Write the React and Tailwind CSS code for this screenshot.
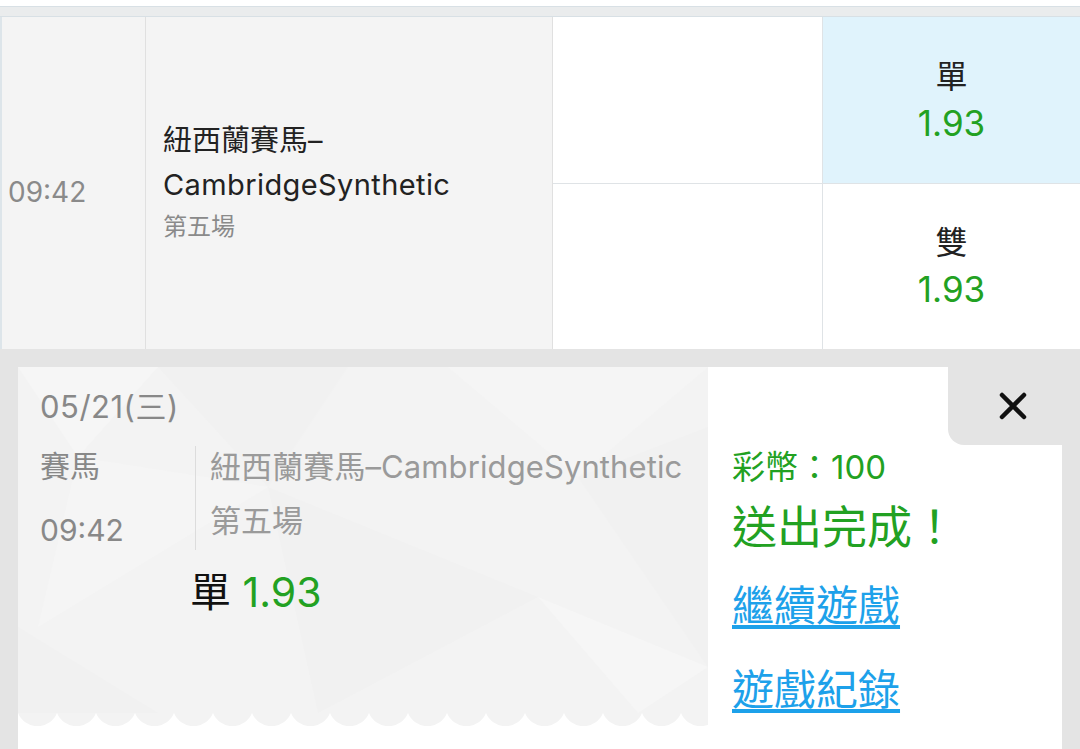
import React from 'react';

const font = { fontFamily: 'Inter, "Noto Sans CJK TC", sans-serif' };

function Scallop() {
  return (
    <svg width="690" height="13" className="block">
      <defs>
        <pattern id="scallop" width="39" height="13" patternUnits="userSpaceOnUse">
          <path d="M0 0 A21 21 0 0 0 39 0 Z" fill="#f3f3f3" />
        </pattern>
      </defs>
      <rect width="690" height="13" fill="url(#scallop)" />
    </svg>
  );
}

function LowPoly() {
  return (
    <svg className="absolute inset-0" width="690" height="346">
      <polygon points="0,0 140,0 60,90" fill="#f6f6f6" />
      <polygon points="140,0 330,0 250,120" fill="#f1f1f1" />
      <polygon points="60,90 250,120 20,260" fill="#f5f5f5" />
      <polygon points="250,120 520,230 300,346" fill="#f1f1f1" />
      <polygon points="430,0 690,0 560,110" fill="#f5f5f5" />
      <polygon points="560,110 690,60 690,300" fill="#f1f1f1" />
      <polygon points="0,260 140,346 0,346" fill="#f1f1f1" />
      <polygon points="520,230 690,300 620,346" fill="#f6f6f6" />
    </svg>
  );
}

function OddsCell({ label, odds, active }) {
  return (
    <div
      className={
        'flex-1 flex flex-col items-center justify-center border-b border-[#dfe3e6] last:border-b-0 ' +
        (active ? 'bg-[#e0f3fc]' : 'bg-white')
      }
    >
      <div className="text-[32px] leading-[46px] text-[#222]">{label}</div>
      <div className="text-[35px] leading-[46px] text-[#22a122]">{odds}</div>
    </div>
  );
}

export default function App() {
  return (
    <div className="w-[1080px] h-[749px] overflow-hidden bg-[#e4e4e4] flex flex-col" style={font}>
      <div className="h-[6px] bg-white shrink-0" />
      <div className="h-[11px] bg-[#eaeced] border-y border-[#d8e0e5] shrink-0" />

      {/* race row */}
      <div className="flex h-[332px] shrink-0 border-l-2 border-[#dde5ea]">
        <div className="w-[144px] bg-[#f4f4f4] border-r border-[#e0e0e0] flex items-center pl-[6px] pt-[18px]">
          <span className="text-[28px] text-[#8a8a8a]">09:42</span>
        </div>
        <div className="w-[407px] bg-[#f4f4f4] border-r border-[#e0e0e0] flex flex-col justify-center pl-[17px]">
          <div className="text-[29px] leading-[44px] text-[#222]">紐西蘭賽馬–</div>
          <div className="text-[29px] leading-[44px] text-[#222] tracking-[0.4px]">CambridgeSynthetic</div>
          <div className="text-[24px] leading-[40px] text-[#8a8a8a]">第五場</div>
        </div>
        <div className="w-[270px] flex flex-col border-r border-[#dfe3e6]">
          <div className="flex-1 bg-white border-b border-[#dfe3e6]" />
          <div className="flex-1 bg-white" />
        </div>
        <div className="flex-1 flex flex-col">
          <OddsCell label="單" odds="1.93" active />
          <OddsCell label="雙" odds="1.93" />
        </div>
      </div>

      {/* ticket */}
      <div className="flex-1 pt-[18px] px-[18px]">
        <div className="flex h-full bg-white">
          <div className="w-[690px] flex flex-col">
            <div className="relative h-[346px] bg-[#f3f3f3]">
              <LowPoly />
              <div className="relative pl-[22px] pt-[20px]">
                <div className="text-[31px] leading-[40px] text-[#888] tracking-[0.5px]">05/21(三)</div>
                <div className="flex mt-[19px]">
                  <div className="w-[155px] flex flex-col gap-[24px]">
                    <div className="text-[30px] leading-[40px] text-[#888]">賽馬</div>
                    <div className="text-[30px] leading-[40px] text-[#888]">09:42</div>
                  </div>
                  <div className="border-l border-[#dcdcdc] pl-[14px] flex flex-col gap-[13px] pb-[6px]">
                    <div className="text-[31px] leading-[42px] text-[#9a9a9a] tracking-[0.1px] whitespace-nowrap">紐西蘭賽馬–CambridgeSynthetic</div>
                    <div className="text-[31px] leading-[40px] text-[#9a9a9a]">第五場</div>
                  </div>
                </div>
                <div className="pl-[150px] mt-[18px] text-[41px] leading-[48px]">
                  <span className="text-[#111]">單</span>{' '}
                  <span className="text-[#22a122]">1.93</span>
                </div>
              </div>
            </div>
            <Scallop />
          </div>

          <div className="flex-1 relative pl-[24px] pt-[78px]">
            <div className="absolute top-0 right-0 w-[114px] h-[78px] bg-[#e4e4e4] rounded-bl-[16px] flex items-center justify-center pl-[16px]">
              <svg width="30" height="30" viewBox="0 0 30 30">
                <path d="M4 4 L26 26 M26 4 L4 26" stroke="#111" strokeWidth="4.5" strokeLinecap="round" />
              </svg>
            </div>
            <div className="text-[33px] leading-[44px] text-[#22a122]">彩幣：100</div>
            <div className="text-[45px] leading-[56px] text-[#22a122] mt-[11px]">送出完成！</div>
            <div className="mt-[26px] flex flex-col gap-[36px]">
              <a className="text-[42px] leading-[48px] text-[#1da1ea] underline underline-offset-[4px]">繼續遊戲</a>
              <a className="text-[42px] leading-[48px] text-[#1da1ea] underline underline-offset-[4px]">遊戲紀錄</a>
            </div>
          </div>
        </div>
      </div>
    </div>
  );
}
